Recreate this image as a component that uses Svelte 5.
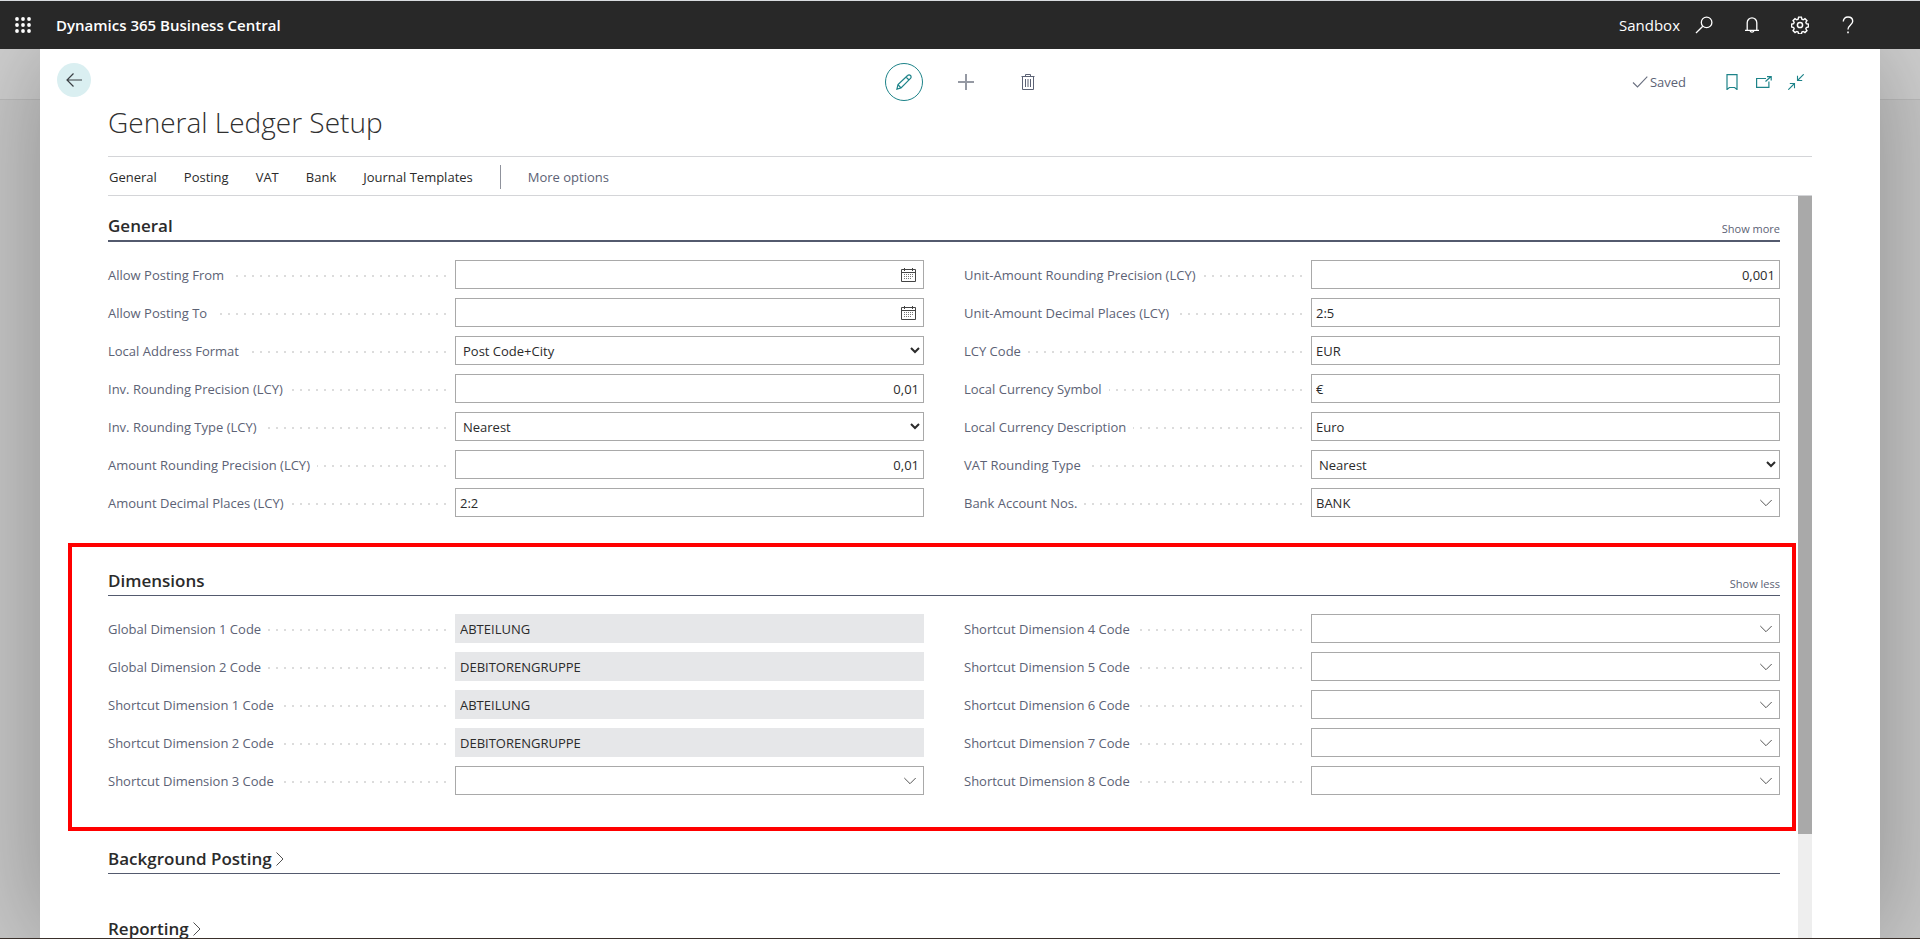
<script>
  const menu = ['General', 'Posting', 'VAT', 'Bank', 'Journal Templates'];

  const sections = [
    {
      title: 'General',
      toggle: 'Show more',
      strong: true,
      columns: [
        [
          { label: 'Allow Posting From', kind: 'date', value: '' },
          { label: 'Allow Posting To', kind: 'date', value: '' },
          { label: 'Local Address Format', kind: 'select', value: 'Post Code+City' },
          { label: 'Inv. Rounding Precision (LCY)', kind: 'number', value: '0,01' },
          { label: 'Inv. Rounding Type (LCY)', kind: 'select', value: 'Nearest' },
          { label: 'Amount Rounding Precision (LCY)', kind: 'number', value: '0,01' },
          { label: 'Amount Decimal Places (LCY)', kind: 'text', value: '2:2' }
        ],
        [
          { label: 'Unit-Amount Rounding Precision (LCY)', kind: 'number', value: '0,001' },
          { label: 'Unit-Amount Decimal Places (LCY)', kind: 'text', value: '2:5' },
          { label: 'LCY Code', kind: 'text', value: 'EUR' },
          { label: 'Local Currency Symbol', kind: 'text', value: '€' },
          { label: 'Local Currency Description', kind: 'text', value: 'Euro' },
          { label: 'VAT Rounding Type', kind: 'select', value: 'Nearest' },
          { label: 'Bank Account Nos.', kind: 'lookup', value: 'BANK' }
        ]
      ]
    },
    {
      title: 'Dimensions',
      toggle: 'Show less',
      marked: true,
      columns: [
        [
          { label: 'Global Dimension 1 Code', kind: 'readonly', value: 'ABTEILUNG' },
          { label: 'Global Dimension 2 Code', kind: 'readonly', value: 'DEBITORENGRUPPE' },
          { label: 'Shortcut Dimension 1 Code', kind: 'readonly', value: 'ABTEILUNG' },
          { label: 'Shortcut Dimension 2 Code', kind: 'readonly', value: 'DEBITORENGRUPPE' },
          { label: 'Shortcut Dimension 3 Code', kind: 'lookup', value: '' }
        ],
        [4, 5, 6, 7, 8].map((n) => ({ label: `Shortcut Dimension ${n} Code`, kind: 'lookup', value: '' }))
      ]
    },
    { title: 'Background Posting' },
    { title: 'Reporting' }
  ];
</script>

<div class="app">
  <header class="shell">
    <button class="icon" aria-label="App launcher">
      <svg width="16" height="16" viewBox="0 0 16 16" fill="#fff">
        {#each [2, 8, 14] as y}
          {#each [2, 8, 14] as x}
            <circle cx={x} cy={y} r="1.9" />
          {/each}
        {/each}
      </svg>
    </button>
    <a class="brand" href="#home">Dynamics 365 Business Central</a>
    <span class="env">Sandbox</span>
    <nav class="tools" aria-label="Tools">
      <button class="icon" aria-label="Search">
        <svg width="18" height="18" viewBox="0 0 18 18" fill="none" stroke="#fff" stroke-width="1.3">
          <circle cx="11.6" cy="6.4" r="5.3" /><path d="M7.8 10.2 1 17" />
        </svg>
      </button>
      <button class="icon" aria-label="Notifications">
        <svg width="18" height="18" viewBox="0 0 18 18" fill="none" stroke="#fff" stroke-width="1.3">
          <path d="M2 14.4h14M4.2 14.4V6.8a4.8 5 0 0 1 9.600 0v7.600M7 14.6a2.1 2.100 0 0 0 4 0" />
        </svg>
      </button>
      <button class="icon" aria-label="Settings">
        <svg width="18" height="18" viewBox="0 0 18 18" fill="none" stroke="#fff" stroke-width="1.5">
          <path d="M7.500.8h3l.5 2.200 1.400.6 1.900-1.200 2.100 2.100-1.200 1.900.6 1.400 2.200.5v3l-2.200.5-.6 1.400 1.200 1.900-2.100 2.100-1.900-1.200-1.400.6-.5 2.200h-3L7 16.600 5.600 16l-1.900 1.200-2.100-2.100 1.200-1.900-.6-1.400L0 11.300v-3l2.200-.5.6-1.400-1.200-1.900 2.100-2.100 1.900 1.200L7 3z" transform="matrix(.94 0 0 .94 .54 .4)" />
          <circle cx="9" cy="9" r="2.600" />
        </svg>
      </button>
      <button class="icon" aria-label="Help">
        <svg width="18" height="18" viewBox="0 0 18 18" fill="none" stroke="#fff" stroke-width="1.4">
          <path d="M4.300 5.600C4.300 2.700 6.200 1 9 1s4.700 1.700 4.700 4.200c0 3.600-4.700 4.100-4.700 8.300" />
          <path d="M9 15.400V17.200" stroke-width="1.600" />
        </svg>
      </button>
    </nav>
  </header>

  <div class="backdrop">
    <main class="page">
      <div class="topbar">
        <button class="back" aria-label="Back">
          <svg width="16" height="14" viewBox="0 0 16 14" fill="none" stroke="#3b4044" stroke-width="1.2">
            <path d="M16 7H1M7.500.500 1 7l6.500 6.500" />
          </svg>
        </button>
        <div class="actions">
          <button class="edit" aria-label="Edit">
            <svg width="16" height="16" viewBox="0 0 16 16" fill="none" stroke="#1d8389" stroke-width="1.2">
              <path d="M.9 15.100 2 10.600 11.600 1.500a2 2 0 0 1 2.900 2.900L5 14zM2 10.600 5 14M10 3l3 3" />
            </svg>
          </button>
          <button class="action" aria-label="New">
            <svg width="16" height="16" viewBox="0 0 16 16" stroke="#9599a3" stroke-width="2"><path d="M8 0v16M0 8h16" /></svg>
          </button>
          <button class="action" aria-label="Delete">
            <svg width="14" height="16" viewBox="0 0 14 16" fill="none" stroke="#5c6275">
              <path d="M.5 2.500h13M4.500 2.500v-2h5v2M1.500 2.500v13h11v-13M4.500 5v8M7 5v8M9.500 5v8" />
            </svg>
          </button>
        </div>
        <div class="status">
          <span class="saved">
            <svg width="16" height="12" viewBox="0 0 16 12" fill="none" stroke="#6a7080" stroke-width="1.100"><path d="m1 6.500 4.500 4.500L15.300.700" /></svg>
            Saved
          </span>
          <button class="icon" aria-label="Bookmark">
            <svg width="16" height="16" viewBox="0 0 16 16" fill="none" stroke="#1d8389" stroke-width="1.200"><path d="M3 .6h10v14.900L10.600 13.500H5.400L3 15.500z" /></svg>
          </button>
          <button class="icon" aria-label="Open in new window">
            <svg width="16" height="16" viewBox="0 0 16 16" fill="none" stroke="#1d8389" stroke-width="1.200">
              <path d="M10 4.500H.6v8.900h12.300V7.500M9.500 7.500l5.500-5M11 2.600h4.200v4" />
            </svg>
          </button>
          <button class="icon" aria-label="Collapse">
            <svg width="16" height="16" viewBox="0 0 16 16" fill="none" stroke="#1d8389" stroke-width="1.100">
              <path d="M15.700.3 9.500 6.500M9.500 1.800v4.700h4.700M.3 15.700l6.200-6.200M1.800 9.500h4.700v4.700" />
            </svg>
          </button>
        </div>
      </div>

      <div class="content">
        <h1>General Ledger Setup</h1>
        <nav class="menu" aria-label="Actions">
          {#each menu as item}
            <button>{item}</button>
          {/each}
          <button class="more">More options</button>
        </nav>

        <div class="scroller">
          <div class="sections">
            {#each sections as section, s}
              <section class:marked={section.marked}>
                <div class="head" class:strong={section.strong}>
                  <h2>
                    {section.title}
                    {#if !section.columns}
                      <svg width="8" height="14" viewBox="0 0 8 14" fill="none" stroke="#505050"><path d="m.5.500 6.500 6.500-6.500 6.500" /></svg>
                    {/if}
                  </h2>
                  {#if section.toggle}
                    <button class="toggle">{section.toggle}</button>
                  {/if}
                </div>
                {#if section.columns}
                  <div class="columns">
                    {#each section.columns as column, c}
                      <div class="column">
                        {#each column as field, f}
                          {@const id = `field-${s}-${c}-${f}`}
                          <div class="field">
                            <label for={id}>{field.label}</label>
                            {#if field.kind === 'select'}
                              <select {id}><option>{field.value}</option></select>
                            {:else}
                              <div class="box">
                                <input
                                  {id}
                                  type="text"
                                  value={field.value}
                                  readonly={field.kind === 'readonly'}
                                  class:number={field.kind === 'number'}
                                />
                                {#if field.kind === 'date'}
                                  <button class="assist" aria-label="Choose date">
                                    <svg width="15" height="14" viewBox="0 0 15 14" fill="none" stroke="#444">
                                      <path d="M.5 1.500h14v12H.5zM.5 4.500h14M3.500 0v3M11.500 0v3" />
                                      <path d="M3 6.500h9M3 8.500h9M3 10.500h7" stroke="#777" stroke-dasharray="1 1" />
                                    </svg>
                                  </button>
                                {:else if field.kind === 'lookup'}
                                  <button class="assist" aria-label="Look up value">
                                    <svg width="12" height="8" viewBox="0 0 12 8" fill="none" stroke="#555"><path d="m.300 1 5.700 5.700L11.700 1" /></svg>
                                  </button>
                                {/if}
                              </div>
                            {/if}
                          </div>
                        {/each}
                      </div>
                    {/each}
                  </div>
                {/if}
              </section>
            {/each}
          </div>
          <div class="track"><div class="thumb"></div></div>
        </div>
      </div>
    </main>
  </div>
  <div class="edge"></div>
</div>

<style>
  :global(body) {
    margin: 0;
    background: #c8c8c8;
  }
  .app {
    height: 100vh;
    display: flex;
    flex-direction: column;
    overflow: hidden;
    font: 13px/20px 'Open Sans', 'Noto Sans', sans-serif;
    color: #2b2b2b;
  }
  button, input, select {
    font: inherit;
    color: inherit;
    margin: 0;
  }
  button {
    border: 0;
    padding: 0;
    background: none;
    cursor: pointer;
  }
  svg {
    display: block;
    flex: none;
  }

  .shell {
    position: relative;
    z-index: 1;
    flex: none;
    box-sizing: border-box;
    height: 49px;
    display: flex;
    align-items: center;
    padding: 0 63px 0 15px;
    border-top: 1px solid #d9dce0;
    background: #282828;
    color: #fff;
    font-size: 15px;
  }
  .brand {
    margin-left: 25px;
    color: #fff;
    font-weight: 600;
    text-decoration: none;
  }
  .env {
    margin-left: auto;
  }
  .tools {
    display: flex;
    gap: 30px;
    margin-left: 15px;
  }

  .backdrop {
    flex: 1;
    min-height: 0;
    display: flex;
    padding: 0 40px;
    background: linear-gradient(#d0d0d0 50px, #bcbcbc 50px, #bcbcbc 51px, #c8c8c8 51px);
  }
  .page {
    flex: 1;
    min-width: 0;
    display: flex;
    flex-direction: column;
    overflow: hidden;
    background: #fff;
    box-shadow: 0 0 100px rgba(0, 0, 0, 0.3);
  }
  .topbar {
    flex: none;
    display: grid;
    grid-template-columns: 1fr auto 1fr;
    padding: 14px 76px 0 17px;
  }
  .back {
    width: 34px;
    height: 34px;
    display: grid;
    place-items: center;
    border-radius: 50%;
    background: #daeff1;
  }
  .actions {
    display: flex;
    gap: 24px;
    padding-left: 71px;
  }
  .edit, .action {
    box-sizing: border-box;
    width: 38px;
    height: 38px;
    display: grid;
    place-items: center;
  }
  .edit {
    border: 1px solid #1d8389;
    border-radius: 50%;
  }
  .status {
    display: flex;
    align-items: center;
    justify-content: flex-end;
    gap: 16px;
    color: #5c6275;
  }
  .saved {
    display: flex;
    align-items: center;
    gap: 2px;
    margin-right: 22px;
  }

  .content {
    flex: 1;
    min-height: 0;
    display: flex;
    flex-direction: column;
    padding: 0 68px;
  }
  h1 {
    margin: 0;
    padding-bottom: 13px;
    font-size: 28px;
    line-height: 42px;
    font-weight: 300;
    color: #303030;
  }
  .menu {
    flex: none;
    box-sizing: border-box;
    display: flex;
    align-items: center;
    gap: 27px;
    height: 40px;
    padding: 2px 0 0 1px;
    border: solid #d4d5d8;
    border-width: 1px 0;
  }
  .more {
    padding-left: 27px;
    border-left: 1px solid #8f929c;
    line-height: 24px;
    color: #5c6275;
  }

  .scroller {
    flex: 1;
    min-height: 0;
    display: flex;
    gap: 18px;
  }
  .sections {
    flex: 1;
    min-width: 0;
  }
  .track {
    width: 14px;
    background: #eee;
  }
  .thumb {
    height: 86%;
    background: #a9a9a9;
  }
  section {
    position: relative;
    padding-bottom: 25px;
  }
  .marked::after {
    content: '';
    position: absolute;
    inset: -8px -16px -2px -40px;
    border: 4px solid #f00;
    pointer-events: none;
  }
  .head {
    display: flex;
    align-items: flex-end;
    justify-content: space-between;
    padding: 18px 0 2px;
    border-bottom: 1px solid #535a6e;
  }
  .head.strong {
    border-bottom-width: 2px;
  }
  h2 {
    display: flex;
    align-items: center;
    gap: 4px;
    margin: 0;
    font-size: 17px;
    line-height: 24px;
    font-weight: 600;
  }
  .toggle {
    font-size: 11px;
    line-height: 18px;
    color: #5c6275;
  }
  .columns {
    display: grid;
    grid-template-columns: 1fr 1fr;
    gap: 40px;
    padding: 18px 0 9px;
  }
  .column {
    display: grid;
    gap: 9px;
  }
  .field {
    display: grid;
    grid-template-columns: 347fr 469fr;
    height: 29px;
  }
  label {
    display: flex;
    align-items: center;
    gap: 7px;
    padding-right: 8px;
    color: #5c6275;
    white-space: nowrap;
  }
  label::after {
    content: '';
    flex: 1;
    height: 2px;
    margin-top: 3px;
    background: repeating-linear-gradient(to left, transparent 0 1px, #dcdcdc 1px 3px, transparent 3px 8px);
  }
  .box {
    position: relative;
    display: flex;
  }
  input, select {
    box-sizing: border-box;
    width: 100%;
    height: 29px;
    border: 1px solid #a9a9a9;
    border-radius: 0;
    background: #fff;
  }
  input {
    padding: 0 4px;
  }
  select {
    padding: 0 4px 0 3px;
  }
  input:read-only {
    border-color: #e6e7e9;
    background: #e6e7e9;
  }
  .number {
    text-align: right;
  }
  .assist {
    position: absolute;
    inset: 0 8px 0 auto;
    display: grid;
    place-items: center;
  }
  .edge {
    flex: none;
    height: 1px;
    background: #3a302b;
  }
</style>
